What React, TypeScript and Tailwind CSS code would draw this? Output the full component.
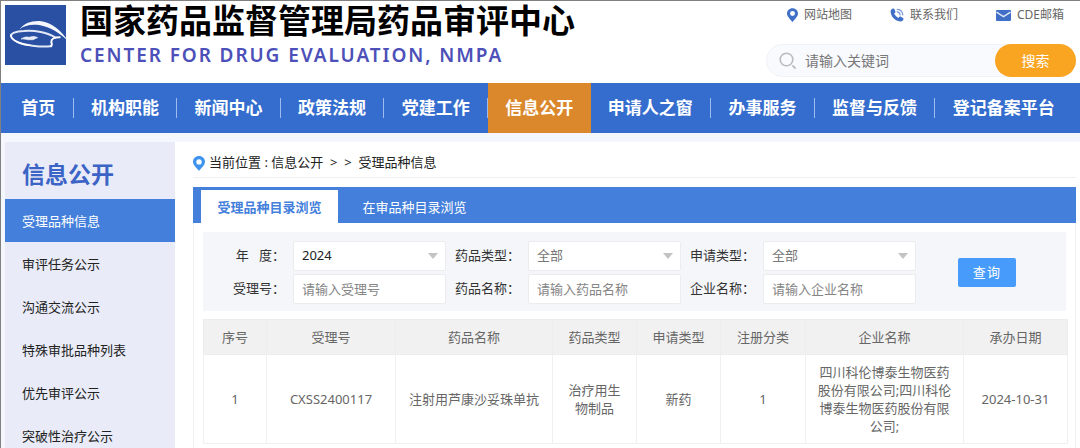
import { useState } from 'react';
import type { ReactNode } from 'react';

/** Rubriques de la barre de navigation principale */
const NAV_ITEMS = [
  '首页',
  '机构职能',
  '新闻中心',
  '政策法规',
  '党建工作',
  '信息公开',
  '申请人之窗',
  '办事服务',
  '监督与反馈',
  '登记备案平台',
];

const ACTIVE_NAV = '信息公开';

/** Entrees du menu lateral */
const SIDE_ITEMS = [
  '受理品种信息',
  '审评任务公示',
  '沟通交流公示',
  '特殊审批品种列表',
  '优先审评公示',
  '突破性治疗公示',
];

const TABS = ['受理品种目录浏览', '在审品种目录浏览'];

/** Colonnes du tableau, avec leur largeur relative */
const COLUMNS = [
  { title: '序号', width: 'w-[63px]' },
  { title: '受理号', width: 'w-[129px]' },
  { title: '药品名称', width: 'w-[157px]' },
  { title: '药品类型', width: 'w-[84px]' },
  { title: '申请类型', width: 'w-[84px]' },
  { title: '注册分类', width: 'w-[85px]' },
  { title: '企业名称', width: 'w-[158px]' },
  { title: '承办日期', width: 'w-[104px]' },
];

const ROWS = [
  [
    '1',
    'CXSS2400117',
    '注射用芦康沙妥珠单抗',
    '治疗用生物制品',
    '新药',
    '1',
    '四川科伦博泰生物医药股份有限公司;四川科伦博泰生物医药股份有限公司;',
    '2024-10-31',
  ],
];

function Logo() {
  return (
    <svg viewBox="14 15 183 180" className="h-[60px] w-[61px] shrink-0 overflow-visible" aria-hidden="true">
      <rect x="14" y="15" width="183" height="180" fill="#2950a3" />
      <path d="M58 88C70 70 92 62 118 63C152 66 184 92 205 125C182 102 150 80 116 75C92 72 72 76 58 88Z" fill="#f4f6fc" />
      <path
        d="M164 112C142 98 104 90 70 93C46 94 31 100 32 108C34 122 62 133 96 137C120 140 140 141 152 138"
        fill="none"
        stroke="#e3e8f6"
        strokeWidth="6"
        strokeLinecap="round"
      />
      <path d="M31 104C34 120 58 131 90 136C62 137 32 122 31 104Z" fill="#fff" stroke="#fff" strokeWidth="3" />
      <path d="M178 112C164 112 153 117 153 125C153 131 158 132 152 139" fill="none" stroke="#fff" strokeWidth="6" strokeLinecap="round" />
      <path d="M62 117C72 110 80 110 87 112C96 108 104 109 112 113C104 115 100 121 90 119C80 121 72 115 62 117Z" fill="#e9edf8" stroke="#e9edf8" strokeWidth="2" />
    </svg>
  );
}

function PinIcon({ className }: { className: string }) {
  return (
    <svg viewBox="0 0 12 15" className={className} aria-hidden="true">
      <path
        fillRule="evenodd"
        fill="currentColor"
        d="M6 0C2.6 0 0 2.6 0 5.8C0 9.2 3.6 12 6 15C8.4 12 12 9.2 12 5.8C12 2.6 9.4 0 6 0ZM6 3.2A2.7 2.7 0 1 1 6 8.6A2.7 2.7 0 1 1 6 3.2Z"
      />
    </svg>
  );
}

function PhoneIcon() {
  return (
    <svg viewBox="0 0 14 14" className="h-[14px] w-[14px]" aria-hidden="true">
      <path
        fill="#3f6fc6"
        d="M3.6 0.6C2 0.4 0.5 1.8 0.6 3.8C0.9 8.8 5.2 13.2 10.2 13.4C12 13.5 13.4 12.2 13.5 10.9C13.5 10.5 13.3 10.3 13 10.1L10.4 8.6C10 8.4 9.6 8.5 9.3 8.8L8.4 9.9C6.5 9 5 7.5 4.1 5.6L5.2 4.7C5.5 4.4 5.6 4 5.4 3.6L4.3 1.1C4.2 0.8 3.9 0.6 3.6 0.6Z"
      />
      <path d="M7.2 3.9C8.7 4.1 9.8 5.2 10.1 6.8M7.4 1.3C10.3 1.6 12.5 3.8 12.8 6.8" fill="none" stroke="#7c9cda" strokeWidth="1.3" strokeLinecap="round" />
    </svg>
  );
}

function MailIcon() {
  return (
    <svg viewBox="0 0 15 11" className="h-[11px] w-[15px]" aria-hidden="true">
      <rect width="15" height="11" rx="1" fill="#3f6fc6" />
      <path d="M0.5 2.2L7.5 6.6L14.5 2.2" fill="none" stroke="#dfe7f7" strokeWidth="1.4" />
    </svg>
  );
}

function SearchIcon() {
  return (
    <svg viewBox="0 0 18 18" className="h-[18px] w-[18px] shrink-0" aria-hidden="true">
      <circle cx="7.5" cy="7.5" r="6.3" fill="none" stroke="#b9bbc0" strokeWidth="1.6" />
      <path d="M13.4 13.4L16.6 16.6" stroke="#b9bbc0" strokeWidth="1.8" />
    </svg>
  );
}

function TopLink({ icon, label }: { icon: ReactNode; label: string }) {
  return (
    <a href="#" className="flex items-center gap-[6px] text-xs leading-5 text-[#666]">
      {icon}
      {label}
    </a>
  );
}

function FieldLabel({ id, children }: { id: string; children: ReactNode }) {
  return (
    <label htmlFor={id} className="text-right whitespace-pre text-[#333]">
      {children}
    </label>
  );
}

function SelectField({ id, options, muted }: { id: string; options: string[]; muted?: boolean }) {
  return (
    <div className="relative">
      <select
        id={id}
        className={`h-[30px] w-full appearance-none rounded-xs border border-[#ececf0] bg-white px-2 ${muted ? 'text-[#777]' : 'text-[#222]'}`}
      >
        {options.map((option) => (
          <option key={option}>{option}</option>
        ))}
      </select>
      <svg viewBox="0 0 10 6" className="pointer-events-none absolute top-3 right-2 h-[6px] w-[10px]" aria-hidden="true">
        <path d="M0 0H10L5 6Z" fill="#c3c3c6" />
      </svg>
    </div>
  );
}

function TextField({ id, placeholder }: { id: string; placeholder: string }) {
  return (
    <input
      id={id}
      type="text"
      placeholder={placeholder}
      className="h-[30px] w-full min-w-0 rounded-xs border border-[#ececf0] bg-white px-2 placeholder:text-[#858585]"
    />
  );
}

export default function App() {
  const [tab, setTab] = useState(TABS[0]);

  return (
    <div className="border-t border-l border-[#808080] bg-[#f5f7fe] font-['Noto_Sans','Noto_Sans_CJK_SC',sans-serif] text-[13px]">
      {/* En-tete : identite, liens et recherche */}
      <header className="flex h-[82px] justify-between bg-white pt-1 pr-1 pl-1">
        <div className="flex gap-[14px]">
          <Logo />
          <div>
            <h1 className="text-[33px] leading-8 font-bold whitespace-nowrap text-black">国家药品监督管理局药品审评中心</h1>
            <p className="mt-1 text-[19px] leading-7 font-semibold tracking-widest whitespace-nowrap text-[#4c50b8]">
              CENTER FOR DRUG EVALUATION, NMPA
            </p>
          </div>
        </div>
        <div className="flex w-[310px] flex-col justify-between pb-[6px]">
          <div className="flex justify-end gap-[38px] pr-3">
            <TopLink icon={<PinIcon className="h-[14px] w-[11px] text-[#3f6fc6]" />} label="网站地图" />
            <TopLink icon={<PhoneIcon />} label="联系我们" />
            <TopLink icon={<MailIcon />} label="CDE邮箱" />
          </div>
          <form className="flex h-[33px] items-center rounded-full border border-[#f1f2f7] bg-[#f9fafe]" onSubmit={(e) => e.preventDefault()}>
            <label htmlFor="keyword" className="pr-2 pl-3">
              <SearchIcon />
            </label>
            <input id="keyword" type="search" placeholder="请输入关键词" className="min-w-0 flex-1 text-[14px] placeholder:text-[#777]" />
            <button type="submit" className="-mr-px h-[33px] w-[81px] rounded-full bg-[#f9a521] text-[14px] text-white">
              搜索
            </button>
          </form>
        </div>
      </header>

      {/* Navigation principale */}
      <nav className="bg-[#346dce] pr-2 pl-[3px]">
        <ul className="flex h-[50px]">
          {NAV_ITEMS.map((item, index) => {
            const active = item === ACTIVE_NAV;
            const last = index === NAV_ITEMS.length - 1;
            return (
              <li key={item} className={`flex flex-auto items-center ${active ? 'bg-[#db882c]' : ''}`}>
                <a href="#" className="flex-1 text-center text-[17px] leading-6 font-bold whitespace-nowrap text-white">
                  {item}
                </a>
                {!last && !active && <span className="h-5 w-px bg-[#9dbbee]" />}
              </li>
            );
          })}
        </ul>
      </nav>

      <div className="flex pt-[9px] pl-1">
        {/* Menu lateral */}
        <aside className="w-[170px] shrink-0 bg-[#e9ecf8]">
          <h2 className="h-[57px] pt-[14px] pl-[17px] text-[23px] leading-9 font-bold text-[#3b64c6]">信息公开</h2>
          <ul>
            {SIDE_ITEMS.map((item, index) => (
              <li key={item}>
                <a
                  href="#"
                  className={`flex h-[43px] items-center pt-[2px] pl-[17px] ${index === 0 ? 'bg-[#4480db] text-white' : 'text-[#222]'}`}
                >
                  {item}
                </a>
              </li>
            ))}
          </ul>
        </aside>

        <main className="min-w-0 flex-1 bg-white pr-1 pl-[18px]">
          {/* Fil d'Ariane */}
          <div className="flex h-9 items-center gap-1 border-b border-[#eef1f1] pt-[7px] text-[#222]">
            <PinIcon className="h-[15px] w-[12px] text-[#3e93ee]" />
            <p className="whitespace-pre">{'当前位置 : 信息公开  >  >  受理品种信息'}</p>
          </div>

          <section className="mt-[9px] border-x border-[#eff0f4]">
            <div role="tablist" className="-mx-px flex h-9 bg-[#4480db] pt-[3px] pl-2">
              {TABS.map((name) => (
                <button
                  key={name}
                  type="button"
                  role="tab"
                  aria-selected={tab === name}
                  onClick={() => setTab(name)}
                  className={`w-[137px] pt-[2px] ${tab === name ? 'bg-white font-bold text-[#4480db]' : 'ml-2 text-white'}`}
                >
                  {name}
                </button>
              ))}
            </div>

            <div className="px-[9px] pt-[9px] pb-1">
              {/* Criteres de recherche */}
              <form className="flex items-center bg-[#f4f6fa] pt-[9px] pr-[50px] pb-[7px] pl-4" onSubmit={(e) => e.preventDefault()}>
                <div className="grid flex-1 grid-cols-[66px_1fr_66px_1fr_66px_1fr] items-center gap-x-2 gap-y-[3px]">
                  <FieldLabel id="year">{'年   度：'}</FieldLabel>
                  <SelectField id="year" options={['2024']} />
                  <FieldLabel id="drug-type">药品类型：</FieldLabel>
                  <SelectField id="drug-type" options={['全部']} muted />
                  <FieldLabel id="apply-type">申请类型：</FieldLabel>
                  <SelectField id="apply-type" options={['全部']} muted />
                  <FieldLabel id="accept-no">受理号：</FieldLabel>
                  <TextField id="accept-no" placeholder="请输入受理号" />
                  <FieldLabel id="drug-name">药品名称：</FieldLabel>
                  <TextField id="drug-name" placeholder="请输入药品名称" />
                  <FieldLabel id="company">企业名称：</FieldLabel>
                  <TextField id="company" placeholder="请输入企业名称" />
                </div>
                <button type="submit" className="ml-[42px] h-[29px] w-[58px] rounded-xs bg-[#479cfb] tracking-widest text-white">
                  查询
                </button>
              </form>

              {/* Liste des dossiers */}
              <table className="mt-2 w-full table-fixed border-collapse text-center leading-[18px] text-[#666]">
                <thead>
                  <tr className="h-[35px] bg-[#f1f1f1]">
                    {COLUMNS.map((column) => (
                      <th key={column.title} className={`border border-[#ededed] font-normal ${column.width}`}>
                        {column.title}
                      </th>
                    ))}
                  </tr>
                </thead>
                <tbody>
                  {ROWS.map((row) => (
                    <tr key={row[1]} className="h-[89px]">
                      {row.map((cell, index) => (
                        <td key={COLUMNS[index].title} className="border border-[#f0f0f0] px-[10px]">
                          {cell}
                        </td>
                      ))}
                    </tr>
                  ))}
                </tbody>
              </table>
            </div>
          </section>
        </main>
      </div>
    </div>
  );
}
